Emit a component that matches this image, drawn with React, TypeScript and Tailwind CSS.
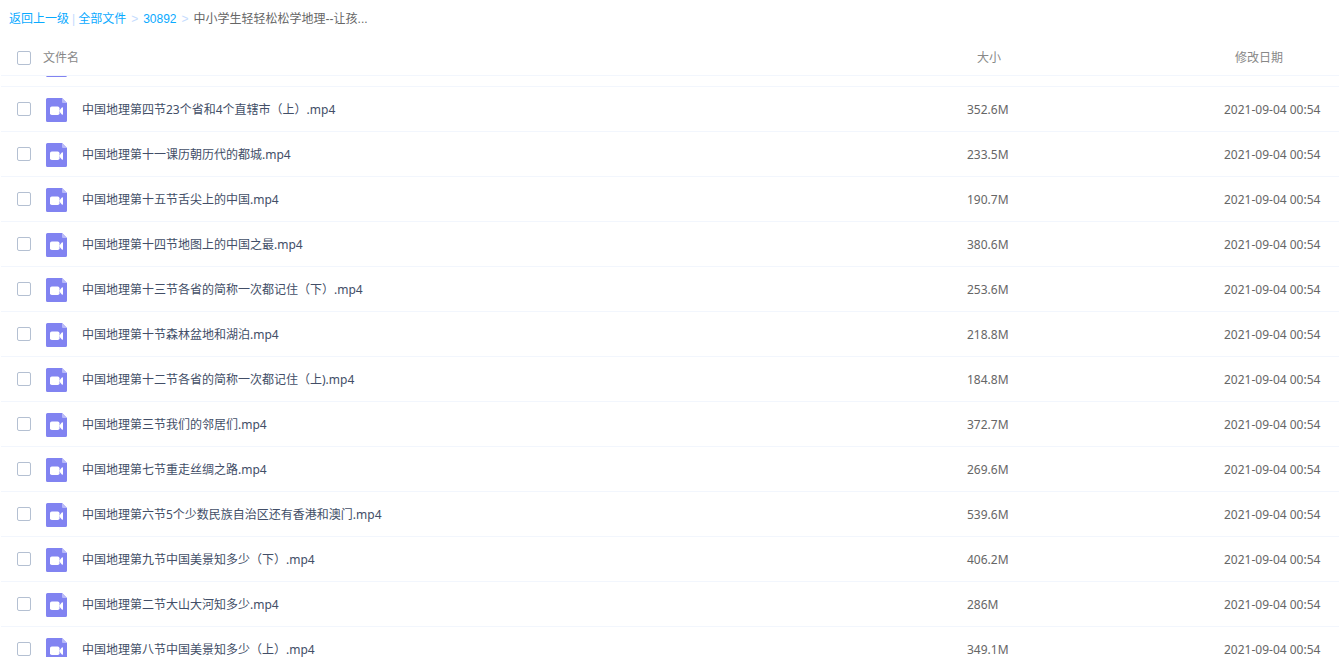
import { useLayoutEffect, useRef, useState } from 'react';

type FileItem = {
  id: number;
  name: string;
  size: string;
  date: string;
};

const files: FileItem[] = [
  { id: 1, name: '', size: '', date: '' },
  { id: 2, name: '中国地理第四节23个省和4个直辖市（上）.mp4', size: '352.6M', date: '2021-09-04 00:54' },
  { id: 3, name: '中国地理第十一课历朝历代的都城.mp4', size: '233.5M', date: '2021-09-04 00:54' },
  { id: 4, name: '中国地理第十五节舌尖上的中国.mp4', size: '190.7M', date: '2021-09-04 00:54' },
  { id: 5, name: '中国地理第十四节地图上的中国之最.mp4', size: '380.6M', date: '2021-09-04 00:54' },
  { id: 6, name: '中国地理第十三节各省的简称一次都记住（下）.mp4', size: '253.6M', date: '2021-09-04 00:54' },
  { id: 7, name: '中国地理第十节森林盆地和湖泊.mp4', size: '218.8M', date: '2021-09-04 00:54' },
  { id: 8, name: '中国地理第十二节各省的简称一次都记住（上).mp4', size: '184.8M', date: '2021-09-04 00:54' },
  { id: 9, name: '中国地理第三节我们的邻居们.mp4', size: '372.7M', date: '2021-09-04 00:54' },
  { id: 10, name: '中国地理第七节重走丝绸之路.mp4', size: '269.6M', date: '2021-09-04 00:54' },
  { id: 11, name: '中国地理第六节5个少数民族自治区还有香港和澳门.mp4', size: '539.6M', date: '2021-09-04 00:54' },
  { id: 12, name: '中国地理第九节中国美景知多少（下）.mp4', size: '406.2M', date: '2021-09-04 00:54' },
  { id: 13, name: '中国地理第二节大山大河知多少.mp4', size: '286M', date: '2021-09-04 00:54' },
  { id: 14, name: '中国地理第八节中国美景知多少（上）.mp4', size: '349.1M', date: '2021-09-04 00:54' },
];

const checkboxClass =
  'block size-[14px] shrink-0 appearance-none rounded-[2px] border border-[#b4c0d2] bg-white checked:border-[#09aaff] checked:bg-[#09aaff]';

function VideoIcon() {
  return (
    <svg width="21" height="24" viewBox="0 0 21 24" className="shrink-0" aria-hidden="true">
      <path d="M1.5 0H16l5 5v17.5a1.5 1.5 0 0 1-1.5 1.5h-18A1.5 1.5 0 0 1 0 22.5v-21A1.5 1.5 0 0 1 1.5 0Z" fill="#8183f1" />
      <path d="M16 0l5 5h-4a1 1 0 0 1-1-1Z" fill="#b9baf8" />
      <rect x="4" y="8.5" width="9.5" height="8.5" rx="1.8" fill="#fff" />
      <path d="M13.6 12.2L15.8 9.6Q17 8.8 17 10v6q0 1.2-1.2.4l-2.2-2.6Z" fill="#fff" />
    </svg>
  );
}

export default function App() {
  const scrollRef = useRef<HTMLDivElement>(null);
  const [selected, setSelected] = useState<number[]>([]);

  useLayoutEffect(() => {
    if (scrollRef.current) scrollRef.current.scrollTop = 34;
  }, []);

  const toggle = (id: number) => {
    setSelected((prev) => (prev.includes(id) ? prev.filter((x) => x !== id) : [...prev, id]));
  };

  const toggleAll = () => {
    setSelected(selected.length === files.length ? [] : files.map((f) => f.id));
  };

  return (
    <div className="flex h-screen flex-col bg-white text-[12px] leading-4 font-['Noto_Sans','Noto_Sans_CJK_SC',sans-serif]">
      {/* Breadcrumb */}
      <nav className="flex h-[38px] shrink-0 items-center pl-[9px] text-[#666] font-['Liberation_Sans','Noto_Sans_CJK_SC',sans-serif]">
        <a href="#back" className="text-[#09aaff]">返回上一级</a>
        <span className="px-[3px] text-[#c4dbfe]">|</span>
        <a href="#all" className="text-[#09aaff]">全部文件</a>
        <span className="px-[5px] text-[#c4dbfe]">&gt;</span>
        <a href="#30892" className="text-[#09aaff]">30892</a>
        <span className="px-[5px] text-[#c4dbfe]">&gt;</span>
        <span>中小学生轻轻松松学地理--让孩...</span>
      </nav>

      {/* File list */}
      <div ref={scrollRef} className="ml-px min-h-0 flex-1 overflow-y-auto [scrollbar-width:none]">
        <table className="w-full table-fixed border-separate border-spacing-0 text-left">
          <thead className="text-[#888]">
            <tr className="h-[38px]">
              <th className="sticky top-0 z-10 border-b border-[#f2f6fd] bg-white p-0 pt-[2px] pl-4 font-normal">
                <div className="flex items-center">
                  <input
                    type="checkbox"
                    id="select-all"
                    className={checkboxClass}
                    checked={selected.length === files.length}
                    onChange={toggleAll}
                  />
                  <label htmlFor="select-all" className="pl-3">文件名</label>
                </div>
              </th>
              <th className="sticky top-0 z-10 w-[254px] border-b border-[#f2f6fd] bg-white p-0 pt-[2px] pl-[10px] font-normal">
                大小
              </th>
              <th className="sticky top-0 z-10 w-[118px] border-b border-[#f2f6fd] bg-white p-0 pt-[2px] pl-[14px] font-normal">
                修改日期
              </th>
            </tr>
          </thead>
          <tbody className="text-[#666]">
            {files.map((file) => (
              <tr key={file.id} className="h-[45px] hover:bg-[#f4fbff]">
                <td className="border-b border-[#f2f6fd] p-0 pl-4">
                  <div className="flex items-center">
                    <input
                      type="checkbox"
                      id={`file-${file.id}`}
                      className={checkboxClass}
                      checked={selected.includes(file.id)}
                      onChange={() => toggle(file.id)}
                    />
                    <label
                      htmlFor={`file-${file.id}`}
                      className="flex items-center gap-[15px] pt-[2px] pl-[15px] text-[#424e67]"
                    >
                      <VideoIcon />
                      <span className="whitespace-nowrap">{file.name}</span>
                    </label>
                  </div>
                </td>
                <td className="border-b border-[#f2f6fd] p-0 pt-[2px]">{file.size}</td>
                <td className="border-b border-[#f2f6fd] p-0 pt-[2px] pl-[3px] whitespace-nowrap">{file.date}</td>
              </tr>
            ))}
          </tbody>
        </table>
      </div>
    </div>
  );
}
